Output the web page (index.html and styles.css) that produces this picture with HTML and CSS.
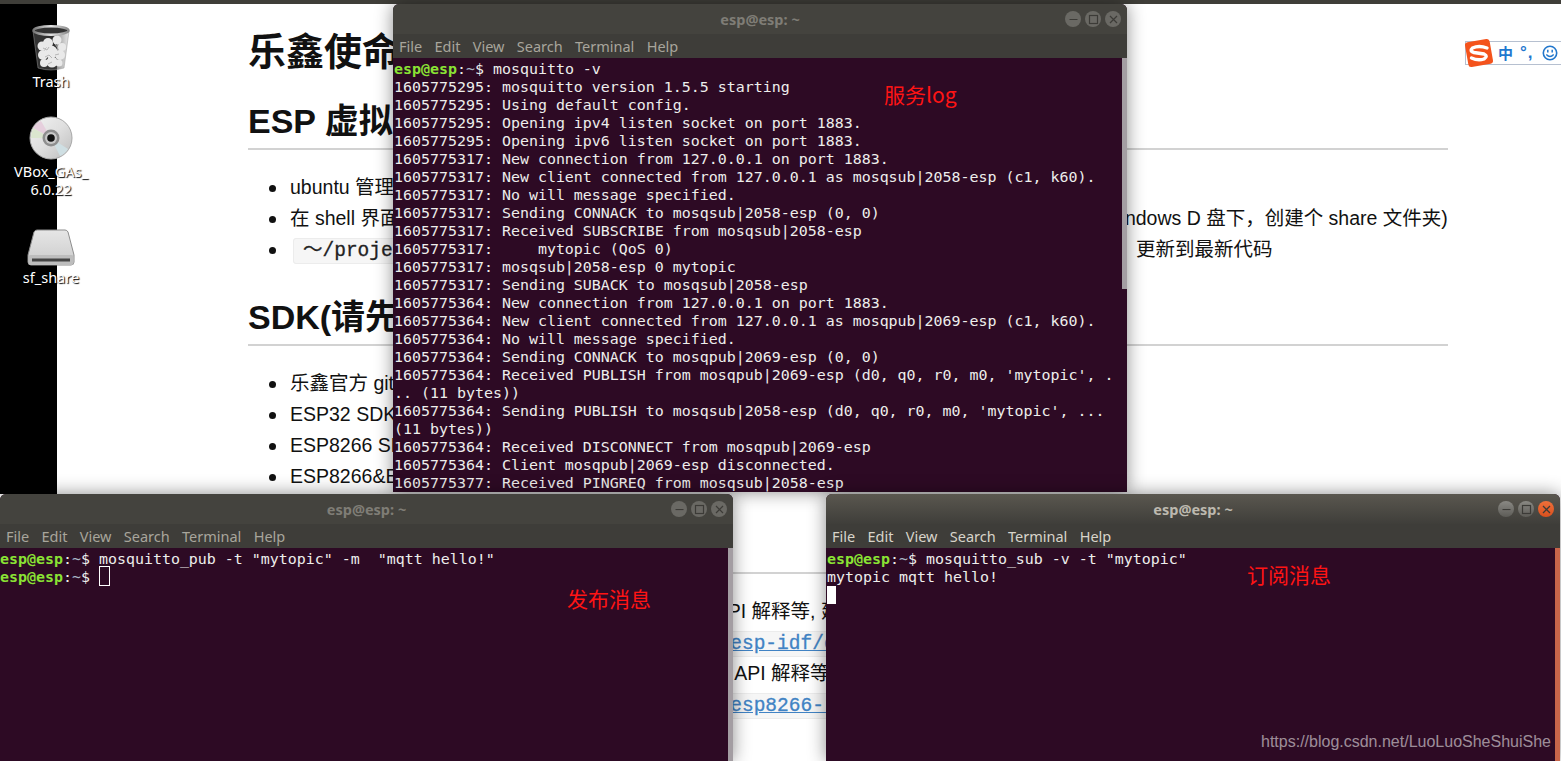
FILE: index.html
```html
<!DOCTYPE html>
<html lang="zh">
<head>
<meta charset="utf-8">
<title>esp@esp: ~</title>
<link rel="stylesheet" href="styles.css">
</head>
<body>
<div class="desktop">
  <div class="topbar"></div>
  <div class="main">
    <div class="strip"></div>
    <article class="doc">
      <h1>乐鑫使命与愿景</h1>
      <h2>ESP 虚拟机环境</h2>
      <ul>
        <li>ubuntu 管理员账户 esp，密码 espressif</li>
        <li>在 shell 界面输入 sudo mount -t vboxsf share ~/esp/share 挂载虚拟机共享文件夹 (需要提前在 Windows D 盘下，创建个 share 文件夹)</li>
        <li><code class="cmd">～/project/esp-idf &amp;&amp; git pull -p &amp;&amp; git submodule update --recursive</code> 更新到最新代码</li>
      </ul>
      <h2>SDK(请先阅读官方文档)</h2>
      <ul>
        <li>乐鑫官方 github</li>
        <li>ESP32 SDK</li>
        <li>ESP8266 SDK</li>
        <li>ESP8266&amp;ESP32 资料</li>
      </ul>
      <h2 class="h2-guide">编程指南</h2>
      <ul>
        <li>ESP32 编程指南，包含全部的组件功能说明与 1. API 解释等, 建议</li>
        <li><code class="url"><a href="#">https://docs.espressif.com/projects/esp-idf/en</a></code></li>
        <li>ESP8266 编程指南，包含全部的组件功能的说明与 API 解释等</li>
        <li><code class="url"><a href="#">https://docs.espressif.com/projects/esp8266-rtos</a></code></li>
      </ul>
    </article>
  </div>

  <div class="icons">
    <div class="icon">
      <svg class="icon-img" width="40" height="46" viewBox="0 0 40 46">
        <defs>
          <linearGradient id="rim" x1="0" x2="1"><stop offset="0" stop-color="#777"/><stop offset=".5" stop-color="#e4e4e4"/><stop offset="1" stop-color="#888"/></linearGradient>
          <linearGradient id="glass" x1="0" x2="1"><stop offset="0" stop-color="#333"/><stop offset=".6" stop-color="#444" stop-opacity=".7"/><stop offset="1" stop-color="#ccc" stop-opacity=".45"/></linearGradient>
        </defs>
        <path d="M2 6 L7 43 Q20 47 33 43 L38 6 Z" fill="url(#glass)" stroke="#999" stroke-opacity=".5"/>
        <g fill="#e9e9e9">
          <circle cx="11" cy="21" r="4.500"/><circle cx="17" cy="18" r="5"/><circle cx="26" cy="15" r="4.500"/><circle cx="31" cy="22" r="4"/>
          <circle cx="12" cy="30" r="5"/><circle cx="20" cy="27" r="6.500"/><circle cx="29" cy="30" r="5"/>
          <circle cx="13" cy="38" r="4"/><circle cx="21" cy="37" r="5.500"/><circle cx="28" cy="38" r="3.500"/>
        </g>
        <path d="M12 23l4 2 2-3M24 19l3 4M14 32l4-2 3 3M24 30l4-1M17 39l4-2" fill="none" stroke="#b5b5b5"/>
        <ellipse cx="20" cy="5.500" rx="17.500" ry="4.200" fill="#333" stroke="url(#rim)" stroke-width="2.500"/>
      </svg>
      <span class="icon-label">Trash</span>
    </div>
    <div class="icon">
      <svg class="icon-img" width="44" height="44" viewBox="0 0 44 44">
        <defs>
          <linearGradient id="cd" x1="0" y1="0" x2="1" y2="1"><stop offset="0" stop-color="#f2f2f2"/><stop offset=".5" stop-color="#dfdfdf"/><stop offset="1" stop-color="#bcbcbc"/></linearGradient>
        </defs>
        <circle cx="22" cy="22" r="21" fill="url(#cd)" stroke="#a8a8a8"/>
        <path d="M22 22 L4 12 Q7 7 12 5 Z" fill="#e6cfdd"/>
        <path d="M22 22 L4 12 Q2 17 2 22 Z" fill="#dbe6cf"/>
        <path d="M22 22 L39 33 Q36 38 31 40 Z" fill="#cfdfe3"/>
        <circle cx="22" cy="22" r="8.500" fill="#8e8e8e"/>
        <circle cx="22" cy="22" r="6" fill="#c9c9c9"/>
        <circle cx="22" cy="22" r="3.800" fill="#111"/>
      </svg>
      <span class="icon-label">VBox_GAs_<br>6.0.22</span>
    </div>
    <div class="icon">
      <svg class="icon-img" width="48" height="38" viewBox="0 0 48 38">
        <defs>
          <linearGradient id="drv" x1="0" y1="0" x2="0" y2="1"><stop offset="0" stop-color="#e6e6e6"/><stop offset="1" stop-color="#cbcbcb"/></linearGradient>
        </defs>
        <path d="M10 1 H38 Q40 1 41 3 L47 26 V33 Q47 36 44 36 H4 Q1 36 1 33 V26 L7 3 Q8 1 10 1 Z" fill="url(#drv)" stroke="#8d8d8d"/>
        <rect x="1.500" y="26" width="45" height="10" rx="2" fill="#bdbdbd"/>
        <rect x="5" y="29.500" width="38" height="3" fill="#444"/>
      </svg>
      <span class="icon-label">sf_share</span>
    </div>
  </div>

  <div class="ime">
    <svg class="ime-logo" width="32" height="32" viewBox="0 0 32 32">
      <rect x="3.500" y="3.500" width="25" height="25" rx="3" fill="#f4531c" transform="rotate(-10 16 16)"/>
      <path d="M24 11 Q16 8 9.500 11 Q6 14 11 15.500 L21 17 Q25.500 19 21 22 Q15 24 8.500 21" fill="none" stroke="#fff" stroke-width="3.400" stroke-linecap="round"/>
    </svg>
    <span class="ime-zh">中</span>
    <span class="ime-punct">°,</span>
    <svg class="ime-face" width="16" height="16" viewBox="0 0 16 16">
      <circle cx="8" cy="8" r="6.700" fill="#fff" stroke="#2277cc" stroke-width="1.600"/>
      <path d="M5.800 4.800v2.600M10.200 4.800v2.600" stroke="#2277cc" stroke-width="1.500"/>
      <path d="M4.300 9.500Q8 13.500 11.700 9.500" fill="none" stroke="#2277cc" stroke-width="1.300"/>
    </svg>
  </div>

  <section class="win win-log">
    <header class="titlebar">
      <span class="title">esp@esp: ~</span>
      <div class="btns">
        <span class="btn"><svg width="15" height="15" viewBox="0 0 15 15"><path d="M3.500 7.500h8" stroke="#3c3b37" stroke-width="1.200"/></svg></span>
        <span class="btn"><svg width="15" height="15" viewBox="0 0 15 15"><rect x="3.500" y="3.500" width="8" height="8" fill="none" stroke="#3c3b37" stroke-width="1.200"/></svg></span>
        <span class="btn"><svg width="15" height="15" viewBox="0 0 15 15"><path d="M4 4l7 7M11 4l-7 7" stroke="#3c3b37" stroke-width="1.200"/></svg></span>
      </div>
    </header>
    <nav class="menu"><span>File</span><span>Edit</span><span>View</span><span>Search</span><span>Terminal</span><span>Help</span></nav>
    <div class="term">
<pre class="screen"><span class="pu">esp@esp</span><span class="pc">:</span><span class="pt">~</span>$ mosquitto -v
1605775295: mosquitto version 1.5.5 starting
1605775295: Using default config.
1605775295: Opening ipv4 listen socket on port 1883.
1605775295: Opening ipv6 listen socket on port 1883.
1605775317: New connection from 127.0.0.1 on port 1883.
1605775317: New client connected from 127.0.0.1 as mosqsub|2058-esp (c1, k60).
1605775317: No will message specified.
1605775317: Sending CONNACK to mosqsub|2058-esp (0, 0)
1605775317: Received SUBSCRIBE from mosqsub|2058-esp
1605775317:     mytopic (QoS 0)
1605775317: mosqsub|2058-esp 0 mytopic
1605775317: Sending SUBACK to mosqsub|2058-esp
1605775364: New connection from 127.0.0.1 on port 1883.
1605775364: New client connected from 127.0.0.1 as mosqpub|2069-esp (c1, k60).
1605775364: No will message specified.
1605775364: Sending CONNACK to mosqpub|2069-esp (0, 0)
1605775364: Received PUBLISH from mosqpub|2069-esp (d0, q0, r0, m0, 'mytopic', .
.. (11 bytes))
1605775364: Sending PUBLISH to mosqsub|2058-esp (d0, q0, r0, m0, 'mytopic', ...
(11 bytes))
1605775364: Received DISCONNECT from mosqpub|2069-esp
1605775364: Client mosqpub|2069-esp disconnected.
1605775377: Received PINGREQ from mosqsub|2058-esp</pre>
      <div class="scroll scroll-log"></div>
    </div>
  </section>

  <section class="win win-pub">
    <header class="titlebar">
      <span class="title">esp@esp: ~</span>
      <div class="btns">
        <span class="btn"><svg width="15" height="15" viewBox="0 0 15 15"><path d="M3.500 7.500h8" stroke="#3c3b37" stroke-width="1.200"/></svg></span>
        <span class="btn"><svg width="15" height="15" viewBox="0 0 15 15"><rect x="3.500" y="3.500" width="8" height="8" fill="none" stroke="#3c3b37" stroke-width="1.200"/></svg></span>
        <span class="btn"><svg width="15" height="15" viewBox="0 0 15 15"><path d="M4 4l7 7M11 4l-7 7" stroke="#3c3b37" stroke-width="1.200"/></svg></span>
      </div>
    </header>
    <nav class="menu"><span>File</span><span>Edit</span><span>View</span><span>Search</span><span>Terminal</span><span>Help</span></nav>
    <div class="term">
<pre class="screen"><span class="pu">esp@esp</span><span class="pc">:</span><span class="pt">~</span>$ mosquitto_pub -t "mytopic" -m  "mqtt hello!"
<span class="pu">esp@esp</span><span class="pc">:</span><span class="pt">~</span>$ <span class="cursor-hollow"></span></pre>
      <div class="scroll scroll-full"></div>
    </div>
  </section>

  <section class="win win-sub focused">
    <header class="titlebar">
      <span class="title">esp@esp: ~</span>
      <div class="btns">
        <span class="btn"><svg width="15" height="15" viewBox="0 0 15 15"><path d="M3.500 7.500h8" stroke="#3c3b37" stroke-width="1.200"/></svg></span>
        <span class="btn"><svg width="15" height="15" viewBox="0 0 15 15"><rect x="3.500" y="3.500" width="8" height="8" fill="none" stroke="#3c3b37" stroke-width="1.200"/></svg></span>
        <span class="btn btn-close"><svg width="15" height="15" viewBox="0 0 15 15"><path d="M4 4l7 7M11 4l-7 7" stroke="#3c3b37" stroke-width="1.300"/></svg></span>
      </div>
    </header>
    <nav class="menu"><span>File</span><span>Edit</span><span>View</span><span>Search</span><span>Terminal</span><span>Help</span></nav>
    <div class="term">
<pre class="screen"><span class="pu">esp@esp</span><span class="pc">:</span><span class="pt">~</span>$ mosquitto_sub -v -t "mytopic"
mytopic mqtt hello!
<span class="cursor-solid"></span></pre>
      <div class="scroll scroll-full scroll-orange"></div>
    </div>
  </section>

  <span class="note note-log">服务log</span>
  <span class="note note-pub">发布消息</span>
  <span class="note note-sub">订阅消息</span>
  <span class="watermark">https://blog.csdn.net/LuoLuoSheShuiShe</span>
</div>
</body>
</html>
```

FILE: styles.css
```css
* { box-sizing: border-box; }
html, body { margin: 0; padding: 0; background: #fff; overflow: hidden; }

.desktop {
  position: relative;
  width: 1561px;
  height: 761px;
  overflow: hidden;
  display: flex;
  flex-direction: column;
  font-family: "Liberation Sans", "Noto Sans CJK SC", sans-serif;
}
.topbar { height: 4px; background: #3f3e39; flex: none; }
.main { flex: 1; display: flex; min-height: 0; }
.strip { width: 57px; height: 490px; background: #000; flex: none; }

.doc {
  padding: 24px 0 0 191px;
  width: 1391px;
  color: #111;
  flex: none;
  white-space: nowrap;
}
.doc h1 { margin: 0; font-size: 38px; line-height: 48px; font-weight: 700; color: #111; }
.doc h2 {
  margin: 25px 0 0;
  padding: 0 0 7px;
  font-size: 34px;
  line-height: 40px;
  font-weight: 700;
  color: #111;
  border-bottom: 2px solid #d2d2d2;
}
.doc h2 ~ h2 { margin-top: 32px; }
.doc h2.h2-guide { margin-top: 33px; }
.doc ul { margin: 22px 0 0; padding: 0 0 0 42px; list-style: none; }
.doc li { position: relative; font-size: 19.500px; line-height: 31px; height: 31px; }
.doc li::before {
  content: "";
  position: absolute;
  left: -21px;
  top: 13px;
  width: 7px;
  height: 7px;
  border-radius: 50%;
  background: #111;
}
.doc code {
  font-family: "Liberation Mono", "Noto Sans CJK SC", monospace;
  font-size: 19.500px;
  -webkit-text-stroke: .3px currentColor;
  background: #f6f6f6;
  border: 1px solid #ececec;
  border-radius: 3px;
  margin-left: 3px;
  padding: 1px 9px;
}
.doc .cmd { margin-right: 14px; color: #222; }
.doc .url { padding-left: 15px; }
.doc a { color: #4183c4; }

/* desktop icons */
.icons {
  position: absolute;
  left: 0;
  top: 25px;
  width: 102px;
  display: flex;
  flex-direction: column;
  align-items: center;
}
.icon { display: flex; flex-direction: column; align-items: center; }
.icon:nth-child(1) { margin-bottom: 26px; }
.icon:nth-child(2) { margin-bottom: 31px; }
.icon-img { display: block; }
.icon-label {
  margin-top: 1px;
  font-family: "Noto Sans", sans-serif;
  font-size: 14.500px;
  line-height: 18px;
  color: #fff;
  text-align: center;
  text-shadow: 1px 1px 1px #000;
}
.icon:nth-child(2) .icon-label { margin-top: 2px; }

/* input method bar */
.ime {
  position: absolute;
  left: 1465px;
  top: 41px;
  width: 96px;
  height: 24px;
  display: flex;
  align-items: center;
  background: #fff;
  border: 1px solid #b6c0d0;
  border-right: 0;
  color: #1f78cf;
}
.ime-logo { position: absolute; left: -3px; top: -5px; }
.ime-zh { margin-left: 32px; font-family: "Noto Sans CJK SC", sans-serif; font-size: 15px; font-weight: 700; line-height: 16px; }
.ime-punct { margin-left: 7px; letter-spacing: 1px; font-family: "Liberation Sans", sans-serif; font-size: 17px; font-weight: 700; line-height: 16px; }
.ime-face { position: absolute; left: 76px; top: 3px; }

/* windows */
.win {
  position: absolute;
  display: flex;
  flex-direction: column;
  background: #2d0a24;
  border-radius: 6px 6px 0 0;
  overflow: hidden;
  box-shadow: 0 0 18px rgba(0, 0, 0, .45);
}
.win-log { left: 393px; top: 4px; width: 734px; height: 488px; }
.win-pub { left: 0; top: 494px; width: 733px; height: 267px; }
.win-sub { left: 826px; top: 494px; width: 734px; height: 267px; }

.titlebar {
  position: relative;
  height: 30px;
  flex: none;
  display: flex;
  align-items: center;
  justify-content: center;
  background: #44433e;
}
.focused .titlebar { background: linear-gradient(#5a574f, #3f3e3a); }
.title { font-family: "Noto Sans", sans-serif; font-size: 14.500px; font-weight: 700; color: #7f7d76; }
.focused .title { color: #bdb9af; }
.btns { position: absolute; right: 6px; top: 7px; display: flex; gap: 4px; }
.btn {
  width: 16px;
  height: 16px;
  border-radius: 50%;
  background: #6a6964;
  display: flex;
  align-items: center;
  justify-content: center;
}
.focused .btn { background: linear-gradient(#8a8984, #5d5c57); }
.focused .btn-close { background: linear-gradient(#f0703a, #d9501e); }

.menu {
  height: 24px;
  flex: none;
  display: flex;
  align-items: center;
  gap: 12.300px;
  padding: 0 0 1px 6px;
  background: #3e3d39;
  font-family: "Noto Sans", sans-serif;
  font-size: 14.500px;
  color: #a8a59c;
}
.focused .menu { color: #d8d4ca; }

.term { position: relative; flex: 1; min-height: 0; background: #2d0a24; }
.screen {
  margin: 0;
  padding: 2px 0 0 1px;
  font-family: "DejaVu Sans Mono", monospace;
  font-size: 14.950px;
  line-height: 18px;
  color: #eeeeec;
}
.win-pub .screen { padding-left: 0; }
.pu { color: #8ae234; font-weight: 700; }
.pc { color: #eeeeec; }
.pt { color: #a9b5c4; }
.cursor-hollow { display: inline-block; width: 11px; height: 20px; margin-top: -2px; border: 1px solid #fff; vertical-align: top; }
.cursor-solid { display: inline-block; width: 9px; height: 18px; background: #fff; vertical-align: top; }

.scroll { position: absolute; right: 0; top: 0; width: 5px; background: #a39da2; }
.scroll-log { height: 231px; }
.scroll-full { bottom: 0; }
.scroll-orange { background: #c8654a; }

/* annotations */
.note {
  position: absolute;
  font-family: "Noto Sans CJK SC", sans-serif;
  font-weight: 400;
  font-size: 21px;
  line-height: 28px;
  color: #ff1414;
}
.note-log { left: 884px; top: 80px; }
.note-pub { left: 567px; top: 584px; }
.note-sub { left: 1247px; top: 560px; }
.watermark {
  position: absolute;
  right: 10px;
  top: 733px;
  font-family: "Liberation Sans", sans-serif;
  font-size: 16px;
  line-height: 18px;
  color: rgba(255, 255, 255, .55);
}
```
